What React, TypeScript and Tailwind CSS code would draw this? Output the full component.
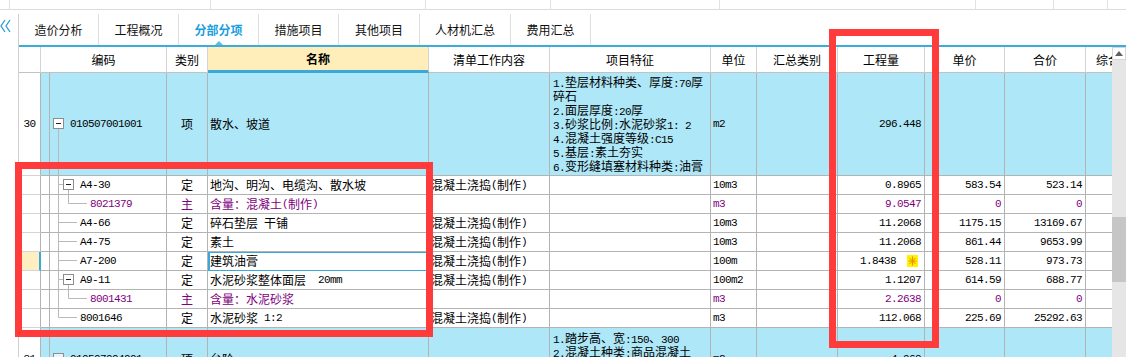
import React from "react";

const MONO = "[font-family:'Liberation_Mono',monospace] text-[11px] tracking-[-0.6px]";

function Mx({ s }: { s: string }) {
  const parts = s.split(/([\x20-\x7E]+)/).filter((p) => p.length > 0);
  return (
    <>
      {parts.map((p, i) =>
        /^[\x20-\x7E]+$/.test(p) ? (
          <span key={i} className="[font-family:'Liberation_Mono',monospace] text-[11px] tracking-[-0.6px]">
            {p}
          </span>
        ) : (
          <span key={i}>{p}</span>
        )
      )}
    </>
  );
}

function Tree({ level, box, last, h, noLine }: { level: number; box?: boolean; last?: boolean; h: number; noLine?: boolean }) {
  const m = Math.floor((h - 1) / 2) + 0.5;
  const L = "#b9b9b9";
  const B = "#8d8d8d";
  if (level === 0) {
    return (
      <svg width={20} height={h} className="shrink-0">
        {!noLine && <line x1={8.5} y1={m + 5} x2={8.5} y2={h} stroke={L} />}
        <rect x={3.5} y={m - 5} width={10} height={10} fill={noLine ? "#e4f5fb" : "#ffffff"} stroke={B} />
        <line x1={6} y1={m} x2={11} y2={m} stroke="#222" />
      </svg>
    );
  }
  if (level === 1) {
    return (
      <svg width={30} height={h} className="shrink-0">
        <line x1={8.5} y1={0} x2={8.5} y2={last ? m : h} stroke={L} />
        {box ? (
          <>
            <line x1={8.5} y1={m} x2={13} y2={m} stroke={L} />
            <line x1={18.5} y1={m + 5} x2={18.5} y2={h} stroke={L} />
            <rect x={13.5} y={m - 5} width={10} height={10} fill="#ffffff" stroke={B} />
            <line x1={16} y1={m} x2={21} y2={m} stroke="#222" />
          </>
        ) : (
          <line x1={8.5} y1={m} x2={27} y2={m} stroke={L} />
        )}
      </svg>
    );
  }
  return (
    <svg width={40} height={h} className="shrink-0">
      <line x1={8.5} y1={0} x2={8.5} y2={h} stroke={L} />
      <line x1={18.5} y1={0} x2={18.5} y2={m} stroke={L} />
      <line x1={18.5} y1={m} x2={37} y2={m} stroke={L} />
    </svg>
  );
}

type Row = {
  code: string;
  type: string;
  name: string;
  content: string;
  unit: string;
  qty: string;
  price: string;
  total: string;
  level: number;
  box?: boolean;
  last?: boolean;
  purple?: boolean;
  sel?: boolean;
  icon?: boolean;
};

const rows: Row[] = [
  { code: "A4-30", type: "定", name: "地沟、明沟、电缆沟、散水坡", content: "混凝土浇捣(制作)", unit: "10m3", qty: "0.8965", price: "583.54", total: "523.14", level: 1, box: true },
  { code: "8021379", type: "主", name: "含量：混凝土(制作)", content: "", unit: "m3", qty: "9.0547", price: "0", total: "0", level: 2, purple: true },
  { code: "A4-66", type: "定", name: "碎石垫层 干铺", content: "混凝土浇捣(制作)", unit: "10m3", qty: "11.2068", price: "1175.15", total: "13169.67", level: 1 },
  { code: "A4-75", type: "定", name: "素土", content: "混凝土浇捣(制作)", unit: "10m3", qty: "11.2068", price: "861.44", total: "9653.99", level: 1 },
  { code: "A7-200", type: "定", name: "建筑油膏", content: "混凝土浇捣(制作)", unit: "100m", qty: "1.8438", price: "528.11", total: "973.73", level: 1, sel: true, icon: true },
  { code: "A9-11", type: "定", name: "水泥砂浆整体面层  20mm", content: "混凝土浇捣(制作)", unit: "100m2", qty: "1.1207", price: "614.59", total: "688.77", level: 1, box: true },
  { code: "8001431", type: "主", name: "含量：水泥砂浆", content: "", unit: "m3", qty: "2.2638", price: "0", total: "0", level: 2, purple: true },
  { code: "8001646", type: "定", name: "水泥砂浆 1:2", content: "混凝土浇捣(制作)", unit: "m3", qty: "112.068", price: "225.69", total: "25292.63", level: 1, last: true },
];

const tabs = [
  { t: "造价分析", w: "w-[80px]" },
  { t: "工程概况", w: "w-[80px]" },
  { t: "分部分项", w: "w-[80px]", active: true },
  { t: "措施项目", w: "w-[80px]" },
  { t: "其他项目", w: "w-[81px]" },
  { t: "人材机汇总", w: "w-[91px]" },
  { t: "费用汇总", w: "w-[80px]" },
];

function StarIcon() {
  return (
    <svg width="11" height="12" viewBox="0 0 11 12" className="shrink-0">
      <rect width="11" height="12" fill="#fff200" />
      <g stroke="#f08a00" strokeWidth="1">
        <line x1="5.5" y1="1.5" x2="5.5" y2="10.5" />
        <line x1="1.5" y1="6" x2="9.5" y2="6" />
        <line x1="2.5" y1="3" x2="8.5" y2="9" />
        <line x1="8.5" y1="3" x2="2.5" y2="9" />
      </g>
    </svg>
  );
}

function BigRow({
  num,
  code,
  name,
  features,
  unit,
  qty,
  h,
  hClass,
  noLine,
}: {
  num: string;
  code: string;
  name: string;
  features: string[];
  unit: string;
  qty: string;
  h: number;
  hClass: string;
  noLine?: boolean;
}) {
  const c = "shrink-0 flex items-center border-r border-b border-[#b3b3b3] bg-[#aee7f8] overflow-hidden whitespace-pre";
  return (
    <div className={`flex shrink-0 ${hClass}`}>
      <div className="shrink-0 w-[22px] flex items-center justify-center border-r border-b border-r-[#b3b3b3] border-b-[#d4d4d4] bg-white">
        <span className={MONO}>{num}</span>
      </div>
      <div className={`${c} w-[126px] items-stretch`}>
        <div className="w-[9px] shrink-0 border-r border-[#b3b3b3]" />
        <Tree level={0} h={h} noLine={noLine} />
        <span className={`${MONO} self-center`}>{code}</span>
      </div>
      <div className={`${c} w-[41px] justify-center`}>项</div>
      <div className={`${c} w-[221px] pl-[2px]`}>{name}</div>
      <div className={`${c} w-[121px]`} />
      <div className={`${c} w-[161px] pl-[3px]`}>
        <div className="flex flex-col">
          {features.map((f, i) => (
            <div key={i} className="h-[14px] leading-[14px] whitespace-nowrap overflow-visible">
              <Mx s={f} />
            </div>
          ))}
        </div>
      </div>
      <div className={`${c} w-[46px] pl-[2px]`}>
        <span className={MONO}>{unit}</span>
      </div>
      <div className={`${c} w-[81px]`} />
      <div className={`${c} w-[87px] justify-end pr-[3px]`}>
        <span className={MONO}>{qty}</span>
      </div>
      <div className={`${c} w-[80px]`} />
      <div className={`${c} w-[81px]`} />
      <div className="shrink-0 w-[26px] border-b border-[#b3b3b3] bg-[#aee7f8]" />
    </div>
  );
}

function DetailRow({ r }: { r: Row }) {
  const color = r.purple ? "text-[#800080]" : "text-black";
  const c = `shrink-0 h-[19px] flex items-center border-r border-b border-[#b3b3b3] overflow-hidden whitespace-pre ${color}`;
  return (
    <div className="flex shrink-0 h-[19px] leading-[18px]">
      {r.sel ? (
        <div className="shrink-0 w-[22px] h-[19px] bg-[#fdefc1] border-r-2 border-b border-r-[#3aa8d8] border-b-[#d4d4d4]" />
      ) : (
        <div className="shrink-0 w-[22px] h-[19px] border-r border-b border-r-[#b3b3b3] border-b-[#d4d4d4]" />
      )}
      <div className={`${c} w-[126px] items-stretch`}>
        <div className="w-[9px] shrink-0 border-r border-[#b3b3b3]" />
        <Tree level={r.level} box={r.box} last={r.last} h={18} />
        <span className={`${MONO} self-center`}>{r.code}</span>
      </div>
      <div className={`${c} w-[41px] justify-center`}>{r.type}</div>
      {r.sel ? (
        <div className={`${c} w-[221px] pl-[2px] border-b-[#3aa8d8] shadow-[inset_2px_1px_0_0_#3aa8d8]`}>
          <Mx s={r.name} />
        </div>
      ) : (
        <div className={`${c} w-[221px] pl-[2px]`}>
          <Mx s={r.name} />
        </div>
      )}
      <div className={`${c} w-[121px] pl-[2px]`}>
        <Mx s={r.content} />
      </div>
      <div className={`${c} w-[161px]`} />
      <div className={`${c} w-[46px] pl-[2px]`}>
        <span className={MONO}>{r.unit}</span>
      </div>
      <div className={`${c} w-[81px]`} />
      {r.icon ? (
        <div className={`${c} w-[87px] justify-end pr-[6px] gap-[11px]`}>
          <span className={MONO}>{r.qty}</span>
          <StarIcon />
        </div>
      ) : (
        <div className={`${c} w-[87px] justify-end pr-[3px]`}>
          <span className={MONO}>{r.qty}</span>
        </div>
      )}
      <div className={`${c} w-[80px] justify-end pr-[3px]`}>
        <span className={MONO}>{r.price}</span>
      </div>
      <div className={`${c} w-[81px] justify-end pr-[3px]`}>
        <span className={MONO}>{r.total}</span>
      </div>
      <div className="shrink-0 w-[26px] h-[19px] border-b border-[#b3b3b3]" />
    </div>
  );
}

export default function App() {
  const hc = "shrink-0 h-[26px] flex items-center justify-center border-r border-b border-r-[#d3d3d3] border-b-[#c2c2c2] bg-white";
  return (
    <div className="relative w-[1126px] h-[357px] overflow-hidden bg-white text-[12px] text-black [font-family:'Noto_Sans_CJK_SC',sans-serif] flex flex-col">
      {/* top band */}
      <div className="flex h-[10px] shrink-0 border-b border-[#dcdcdc]">
        <div className="w-[10px] shrink-0 border-r border-[#e2e2e2]" />
        <div className="w-[201px] shrink-0 border-r border-[#e2e2e2]" />
        <div className="w-[215px] shrink-0 border-r border-[#e2e2e2]" />
        <div className="w-[125px] shrink-0 border-r border-[#e2e2e2]" />
        <div className="w-[169px] shrink-0 border-r border-[#e2e2e2]" />
        <div className="w-[256px] shrink-0 border-r border-[#e2e2e2]" />
        <div className="w-[78px] shrink-0 border-r border-[#e2e2e2]" />
        <div className="w-[54px] shrink-0 border-r border-[#e2e2e2]" />
        <div className="flex-1" />
      </div>
      <div className="h-[4px] shrink-0" />
      <div className="flex flex-1 min-h-0">
        {/* left collapse strip */}
        <div className="w-[18px] shrink-0 pt-[5px]">
          <svg width="11" height="14" viewBox="0 0 11 14">
            <path d="M5 1 L1 7 L5 13" fill="none" stroke="#2b97d8" strokeWidth="1.3" />
            <path d="M10 1 L6 7 L10 13" fill="none" stroke="#2b97d8" strokeWidth="1.3" />
          </svg>
        </div>
        <div className="flex-1 min-w-0 flex flex-col border-l border-[#cfcfcf]">
          {/* tabs */}
          <div className="flex h-[31px] shrink-0">
            {tabs.map((t) => (
              <div
                key={t.t}
                className={`relative shrink-0 ${t.w} flex items-center justify-center border-r border-[#dedede] ${
                  t.active ? "text-[#1a9ee2] font-bold" : "text-[#111111]"
                }`}
              >
                {t.t}
                {t.active && (
                  <svg width="8" height="4" viewBox="0 0 8 4" className="absolute bottom-0 left-[36px]">
                    <polygon points="0,4 4,0 8,4" fill="#5db9e6" />
                  </svg>
                )}
              </div>
            ))}
          </div>
          <div className="h-[2px] shrink-0 bg-[#3aaddc]" />
          <div className="flex flex-1 min-h-0">
            {/* table */}
            <div className="flex-1 min-w-0 flex flex-col overflow-hidden">
              <div className="flex shrink-0">
                <div className={`${hc} w-[22px]`} />
                <div className={`${hc} w-[126px]`}>编码</div>
                <div className={`${hc} w-[41px]`}>类别</div>
                <div className="shrink-0 w-[221px] h-[26px] flex items-center justify-center font-bold bg-[#ffeeb9] border-r border-r-[#d3d3d3] border-b-[3px] border-b-[#3aa8d8] pt-[1px]">
                  名称
                </div>
                <div className={`${hc} w-[121px]`}>清单工作内容</div>
                <div className={`${hc} w-[161px]`}>项目特征</div>
                <div className={`${hc} w-[46px]`}>单位</div>
                <div className={`${hc} w-[81px]`}>汇总类别</div>
                <div className={`${hc} w-[87px]`}>工程量</div>
                <div className={`${hc} w-[80px]`}>单价</div>
                <div className={`${hc} w-[81px]`}>合价</div>
                <div className="shrink-0 w-[26px] h-[26px] flex items-center pl-[10px] whitespace-nowrap overflow-hidden border-b border-[#c2c2c2]">
                  综合单价
                </div>
              </div>
              <BigRow
                num="30"
                code="010507001001"
                name="散水、坡道"
                features={[
                  "1.垫层材料种类、厚度:70厚",
                  "碎石",
                  "2.面层厚度:20厚",
                  "3.砂浆比例:水泥砂浆1: 2",
                  "4.混凝土强度等级:C15",
                  "5.基层:素土夯实",
                  "6.变形缝填塞材料种类:油膏",
                ]}
                unit="m2"
                qty="296.448"
                h={102}
                hClass="h-[103px]"
              />
              {rows.map((r) => (
                <DetailRow key={r.code} r={r} />
              ))}
              <BigRow
                num="31"
                code="010507004001"
                name="台阶"
                features={[
                  "1.踏步高、宽:150、300",
                  "2.混凝土种类:商品混凝土",
                  "3.混凝土强度等级:C20",
                  "4.防滑条材料种类:金刚砂",
                ]}
                unit="m2"
                qty="4.068"
                h={62}
                hClass="h-[63px]"
                noLine
              />
            </div>
            {/* scrollbar */}
            <div className="w-[14px] shrink-0 bg-[#e6e6e6] flex flex-col">
              <div className="h-[13px] shrink-0 bg-white border border-[#d6d6d6] flex items-center justify-center">
                <svg width="8" height="5" viewBox="0 0 8 5">
                  <polygon points="0,5 4,0 8,5" fill="#606060" />
                </svg>
              </div>
              <div className="h-[157px] shrink-0" />
              <div className="h-[65px] shrink-0 bg-[#c6c6c6]" />
            </div>
          </div>
        </div>
      </div>

      {/* annotation boxes */}
      <div className="absolute left-[15px] top-[162px] w-[418px] h-[175px] border-[7px] border-[#ff3b3b]" />
      <div className="absolute left-[829px] top-[29px] w-[110px] h-[319px] border-[7px] border-[#ff3b3b]" />
    </div>
  );
}
